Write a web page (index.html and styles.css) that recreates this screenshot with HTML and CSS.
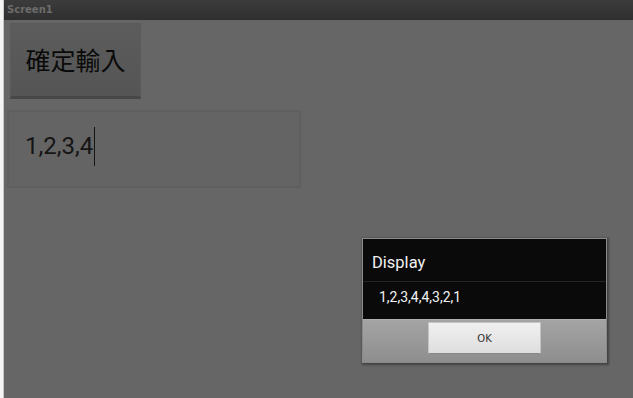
FILE: index.html
```html
<!DOCTYPE html>
<html lang="zh-Hant">
<head>
    <meta charset="UTF-8">
    <meta name="viewport" content="width=device-width, initial-scale=1.0">
    <title>Screen1</title>
    <link rel="stylesheet" href="styles.css">
</head>
<body>

<div class="page">
    <div class="side-strip"></div>
    <div class="screen">
        <div class="titlebar">Screen1</div>
        <div class="content">
            <button class="confirm-button">確定輸入</button>
            <div class="textbox">
                <span class="textbox-value">1,2,3,4</span><span class="cursor"></span>
            </div>
        </div>
    </div>
</div>

<div class="dialog">
    <div class="dialog-title">Display</div>
    <div class="dialog-message">1,2,3,4,4,3,2,1</div>
    <div class="dialog-buttons">
        <button class="dialog-ok">OK</button>
    </div>
</div>

</body>
</html>
```

FILE: styles.css
```css
body {
    margin: 0;
    padding: 0;
    background-color: #666;
    font-family: Roboto, "Noto Sans", sans-serif;
    width: 633px;
    height: 398px;
    overflow: hidden;
    position: relative;
}
.page {
    display: flex;
    height: 398px;
}
.side-strip {
    width: 3px;
    background-color: #f4f4f4;
    border-right: 1px solid #c8c8c8;
}
.screen {
    flex: 1;
    display: flex;
    flex-direction: column;
}
.titlebar {
    height: 20px;
    line-height: 20px;
    background: linear-gradient(#3c3c3c, #2f2f2f);
    color: #6c6c6c;
    font-family: "DejaVu Sans", sans-serif;
    font-size: 10px;
    font-weight: bold;
    padding-left: 3px;
}
.content {
    display: flex;
    flex-direction: column;
    align-items: flex-start;
    padding: 3px 0 0 3px;
}
.confirm-button {
    margin-left: 3px;
    width: 131px;
    height: 76px;
    background: linear-gradient(#5c5c5c, #555);
    border: 1px solid #5a5a5a;
    border-bottom: 3px solid #474747;
    color: #0a0a0a;
    font-family: "Noto Sans CJK TC", "Noto Sans CJK SC", sans-serif;
    font-size: 25px;
    padding: 0 0 2px 0;
    box-sizing: border-box;
}
.textbox {
    margin-top: 11px;
    width: 294px;
    height: 78px;
    box-sizing: border-box;
    background-color: #646464;
    border: 2px solid #5f5f5f;
    display: flex;
    align-items: center;
    padding: 0 0 6px 16px;
}
.textbox-value {
    font-size: 24px;
    color: #151515;
}
.cursor {
    width: 1px;
    height: 39px;
    background-color: #151515;
    margin-left: 1px;
}
.dialog {
    position: absolute;
    left: 362px;
    top: 238px;
    width: 243px;
    height: 123px;
    border: 1px solid #8a8a8a;
    box-shadow: 1px 1px 2px 1px rgba(0, 0, 0, 0.35);
    background-color: #0a0a0a;
    display: flex;
    flex-direction: column;
}
.dialog-title {
    height: 42px;
    line-height: 48px;
    padding-left: 9px;
    color: #f2f2f2;
    font-size: 16.5px;
    border-bottom: 1px solid #262626;
}
.dialog-message {
    height: 37px;
    line-height: 31px;
    padding-left: 16px;
    color: #f2f2f2;
    font-size: 14px;
}
.dialog-buttons {
    flex: 1;
    background: linear-gradient(#a4a4a4, #8e8e8e);
    border-top: 1px solid #b0b0b0;
    display: flex;
    justify-content: center;
    align-items: flex-start;
    padding-top: 2px;
}
.dialog-ok {
    width: 113px;
    height: 32px;
    background: linear-gradient(#f0f0f0, #dedede);
    border: 1px solid #c4c4c4;
    border-bottom-color: #888;
    color: #333;
    font-family: "DejaVu Sans", sans-serif;
    font-size: 10px;
}
```
